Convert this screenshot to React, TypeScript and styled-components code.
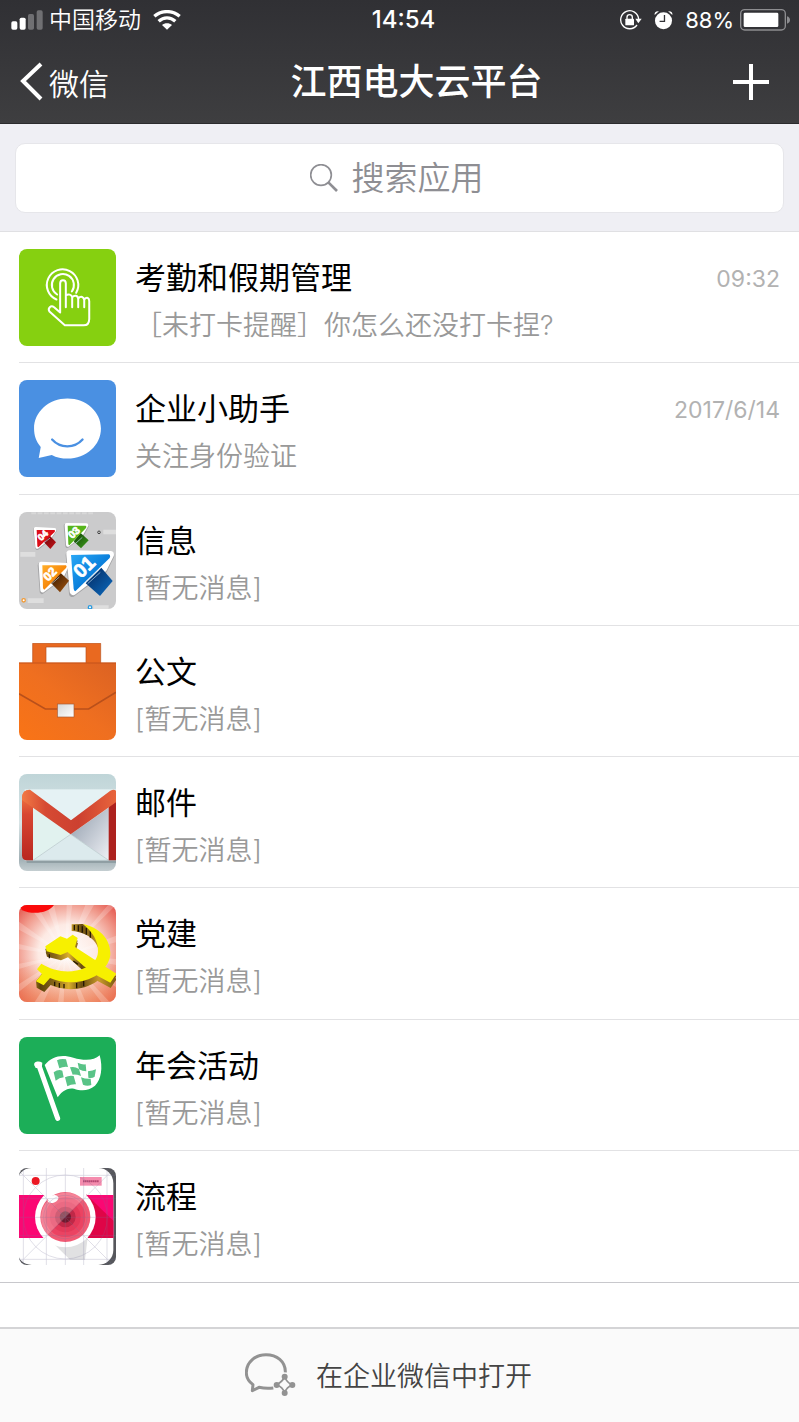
import React from "react";
import styled, { createGlobalStyle } from "styled-components";

const GlobalStyle = createGlobalStyle`
  *, *::before, *::after { box-sizing: border-box; }
  body {
    margin: 0;
    background: #fff;
    color: #000;
    font-family: Inter, "Noto Sans CJK SC", sans-serif;
  }
`;

const Page = styled.div`
  display: flex;
  flex-direction: column;
  min-height: 100vh;
`;

const Header = styled.header`
  color: #fff;
  background: linear-gradient(#303034, #3e3e40);
  border-bottom: 1px solid #2b2b2d;
`;

const StatusBar = styled.div`
  display: grid;
  grid-template-columns: 1fr auto 1fr;
  align-items: center;
  height: 40px;
  padding-left: 8px;
  font-size: 23px;
  font-weight: 350;
  line-height: 40px;
`;

const StatusGroup = styled.div<{ $end?: boolean }>`
  display: flex;
  align-items: center;
  justify-content: ${(p) => (p.$end ? "flex-end" : "flex-start")};
  gap: ${(p) => (p.$end ? "6px" : "12px")};
  padding: ${(p) => (p.$end ? "0 9px 0 0" : "0 0 0 3px")};
`;

const Carrier = styled.span`
  display: flex;
  align-items: center;
  gap: 6px;
`;

const StatusIcons = styled.span`
  display: flex;
  align-items: center;
  gap: 12px;
`;

const Clock = styled.time`
  font-size: 24px;
  font-weight: 500;
`;

const Percent = styled.span`
  font-size: 22px;
  font-weight: 400;
`;

const NavBar = styled.nav`
  display: grid;
  grid-template-columns: 116px 1fr 82px;
  align-items: center;
  height: 83px;
`;

const NavButton = styled.button<{ $end?: boolean }>`
  display: flex;
  align-items: center;
  justify-content: ${(p) => (p.$end ? "flex-end" : "flex-start")};
  gap: 6px;
  height: 100%;
  padding: ${(p) => (p.$end ? "0 30px 0 0" : "0 0 0 20px")};
  border: 0;
  background: none;
  color: inherit;
  font: inherit;
  font-size: 30px;
  font-weight: 350;
  white-space: nowrap;
`;

const NavTitle = styled.h1`
  margin: 0;
  font-size: 36px;
  font-weight: 500;
  line-height: 48px;
  text-align: center;
`;

const SearchArea = styled.div`
  padding: 19px 15px 18px;
  background: #efeff4;
  border-bottom: 1px solid #e0e0e3;
`;

const SearchBox = styled.label`
  display: flex;
  align-items: center;
  justify-content: center;
  gap: 14px;
  height: 70px;
  border: 1px solid #e6e6ea;
  border-radius: 10px;
  background: #fff;
`;

const SearchInput = styled.input`
  width: 138px;
  height: 48px;
  padding: 0;
  border: 0;
  outline: 0;
  background: none;
  color: #333;
  font: inherit;
  font-size: 33px;
  font-weight: 350;
  &::placeholder { color: #8e8e93; opacity: 1; }
`;

const List = styled.ul`
  display: grid;
  grid-auto-rows: 1fr;
  flex: 1;
  margin: 0 0 44px;
  padding: 0;
  list-style: none;
  border-bottom: 1px solid #c8c8cc;
`;

const Item = styled.li`
  padding-left: 19px;
`;

const ItemLink = styled.a<{ $last: boolean }>`
  display: flex;
  gap: 19px;
  height: 100%;
  padding: 17px 19px 12px 0;
  border-bottom: ${(p) => (p.$last ? "0" : "1px solid #e2e2e4")};
  color: inherit;
  text-decoration: none;
`;

const Thumb = styled.svg`
  display: block;
  flex: none;
  width: 97px;
  height: 97px;
  border-radius: 8px;
`;

const ItemText = styled.div`
  flex: 1;
  min-width: 0;
  padding-top: 5px;
`;

const ItemTitle = styled.h2`
  margin: 0;
  font-size: 31px;
  font-weight: 400;
  line-height: 48px;
`;

const ItemNote = styled.p`
  margin: 0;
  color: #999;
  font-size: 27px;
  font-weight: 350;
  line-height: 48px;
`;

const ItemTime = styled.time`
  padding-top: 6px;
  color: #b2b2b2;
  font-size: 23px;
  line-height: 48px;
`;

const Footer = styled.footer`
  border-top: 2px solid #d4d4d6;
  background: #fafafa;
`;

const OpenButton = styled.button`
  display: flex;
  align-items: center;
  justify-content: center;
  gap: 20px;
  width: 100%;
  height: 93px;
  padding: 0 22px 2px 0;
  border: 0;
  background: none;
  color: #444;
  font: inherit;
  font-size: 27px;
  font-weight: 350;
`;

const AttendanceIcon = () => (
  <Thumb viewBox="58 39 290 290" aria-hidden="true">
    <rect x="58" y="39" width="290" height="290" fill="#86d010" />
    <g fill="none" stroke="#fff" strokeWidth="6" strokeLinecap="round" strokeLinejoin="round">
      <path d="M170 190A47 47 0 1 1 229 170" />
      <path d="M172 175A33 33 0 1 1 216 166" />
      <path d="M181 229V142C181 129 198 129 198 142V213M198 178C205 172 216 175 217 184V213M217 184C224 175 234 178 235 188V213M235 187C243 178 252 182 253 192V213M253 190C261 181 268 185 268 195V248Q268 267 251 267H195L149 226C143 216 153 206 163 213L181 229" />
    </g>
  </Thumb>
);

const AssistantIcon = () => (
  <Thumb viewBox="58 433 290 290" aria-hidden="true">
    <rect x="58" y="433" width="290" height="290" fill="#4a90e2" />
    <path
      d="M203 488C259 488 303 528 303 578C303 628 259 668 203 668C186 668 170 665 156 657L117 666L123 633C109 617 103 599 103 578C103 528 147 488 203 488Z"
      fill="#fff"
    />
    <path d="M157 611C181 638 224 638 248 611" fill="none" stroke="#4a90e2" strokeWidth="7" strokeLinecap="round" />
  </Thumb>
);

const InfoIcon = () => (
  <Thumb viewBox="27 36 291 291" aria-hidden="true">
    <defs>
      <linearGradient id="tailRed" x1="0" y1="0" x2="1" y2="1"><stop stopColor="#6a0408" /><stop offset="1" stopColor="#c8141a" /></linearGradient>
      <linearGradient id="tailGreen" x1="0" y1="0" x2="1" y2="1"><stop stopColor="#0e3c06" /><stop offset="1" stopColor="#3fa01a" /></linearGradient>
      <linearGradient id="tailOrange" x1="0" y1="0" x2="1" y2="1"><stop stopColor="#321602" /><stop offset="1" stopColor="#a6560e" /></linearGradient>
      <linearGradient id="tailBlue" x1="0" y1="0" x2="1" y2="1"><stop stopColor="#04265c" /><stop offset="1" stopColor="#0c6cc0" /></linearGradient>
      <linearGradient id="headBlue" x1="0" y1="0" x2="1" y2="1"><stop stopColor="#2aa8f6" /><stop offset=".6" stopColor="#067ad8" /></linearGradient>
      <linearGradient id="headOrange" x1="0" y1="0" x2="1" y2="1"><stop stopColor="#ffae2a" /><stop offset=".6" stopColor="#f68408" /></linearGradient>
    </defs>
    <rect x="27" y="36" width="291" height="291" fill="#cbcbcc" />
    <path d="M64 40H250" stroke="#d8d8d8" strokeWidth="6" strokeDasharray="14 5" />
    <path d="M31 163H76M280 96H318M53 302H101M250 323H296" stroke="#dedede" strokeWidth="14" />
    <circle cx="267" cy="97" r="4" fill="none" stroke="#444" strokeWidth="3" />
    <circle cx="41" cy="301" r="5" fill="#fff" stroke="#f19b38" strokeWidth="4" />
    <circle cx="240" cy="322" r="5" fill="#fff" stroke="#2c9ce0" strokeWidth="4" />
    <g fill="#77777a" stroke="#77777a" strokeLinejoin="round" opacity=".45">
      <path d="M75 89L134 92L120 113L82 144Z" strokeWidth="12" />
      <path d="M167 77L230 79L216 104L172 138Z" strokeWidth="12" />
      <path d="M90 195L170 198L157 230L96 275Z" strokeWidth="14" />
      <path d="M177 166L303 167L282 210L187 281Z" strokeWidth="20" />
    </g>
    <g fill="#fff" stroke="#fff" strokeLinejoin="round">
      <path d="M77 87L133 90L118 112L82 140Z" strokeWidth="12" />
      <path d="M170 75L229 76L214 102L174 134Z" strokeWidth="12" />
      <path d="M93 192L170 196L155 228L98 270Z" strokeWidth="14" />
      <path d="M180 162L301 164L280 206L190 274Z" strokeWidth="22" />
    </g>
    <path d="M118 106L138 127L121 147L102 127Z" fill="url(#tailRed)" />
    <path d="M212 99L236 121L213 145L191 124Z" fill="url(#tailGreen)" />
    <path d="M152 219L177 242L150 277L123 249Z" fill="url(#tailOrange)" />
    <path d="M274 203L308 243L270 288L227 250Z" fill="url(#tailBlue)" />
    <path d="M80 90H133Q137 92 134 96L85 142Q82 141 82 137Z" fill="#dc0e18" />
    <path d="M173 77H227Q231 80 228 84L178 136Q175 135 175 131Z" fill="#57b51c" />
    <path d="M97 196H168Q172 199 168 204L103 269Q100 268 99 264Z" fill="url(#headOrange)" />
    <path d="M183 165L296 163Q303 166 299 174L196 274Q192 273 191 267Z" fill="url(#headBlue)" />
    <g fill="#fff" stroke="#fff" strokeWidth="2" fontFamily="Liberation Sans" fontWeight="700">
      <text x="94" y="124" fontSize="28" transform="rotate(-44 94 124)">04</text>
      <text x="187" y="118" fontSize="32" transform="rotate(-44 187 118)">03</text>
      <text x="114" y="245" fontSize="36" transform="rotate(-44 114 245)">02</text>
      <text x="213" y="237" fontSize="58" transform="rotate(-44 213 237)">01</text>
    </g>
    <path d="M228 245L267 209M233 251L271 217M126 250L148 231M197 130L217 112M100 130L120 114" stroke="#bcd8ea" strokeWidth="3" opacity=".7" />
  </Thumb>
);

const BriefcaseIcon = () => (
  <Thumb viewBox="27 33 291 291" aria-hidden="true">
    <defs>
      <linearGradient id="leather" x1="0" y1="1" x2="1" y2="0"><stop stopColor="#f97416" /><stop offset=".5" stopColor="#ef6f20" /><stop offset="1" stopColor="#db6223" /></linearGradient>
      <linearGradient id="clasp" x1="0" y1="0" x2="1" y2="1"><stop stopColor="#d5d5d5" /><stop offset="1" stopColor="#fff" /></linearGradient>
    </defs>
    <path d="M68 34H272V96H228V45H108V96H68Z" fill="#e96920" stroke="#b9501b" strokeWidth="2" />
    <rect x="27" y="92" width="291" height="232" fill="url(#leather)" />
    <path d="M27 93H318" stroke="#c4531a" strokeWidth="3" />
    <path d="M27 185L106 231H236L318 181" fill="none" stroke="#b9501b" strokeWidth="5" />
    <rect x="142" y="216" width="50" height="39" fill="url(#clasp)" stroke="#a65a33" strokeWidth="2" />
  </Thumb>
);

const MailIcon = () => (
  <Thumb viewBox="27 33 291 291" aria-hidden="true">
    <defs>
      <linearGradient id="mailBack" x1="0" y1="0" x2="0" y2="1"><stop stopColor="#bfd5d8" /><stop offset=".5" stopColor="#d8e4e6" /><stop offset=".88" stopColor="#a2b1b6" /><stop offset="1" stopColor="#c4ced1" /></linearGradient>
      <linearGradient id="mailRed" x1="0" y1="0" x2="0" y2="1"><stop stopColor="#f78448" /><stop offset=".35" stopColor="#d84632" /><stop offset="1" stopColor="#b9261f" /></linearGradient>
      <linearGradient id="mailShade" x1="0" y1="0" x2="1" y2="1"><stop stopColor="#8f9baa" /><stop offset="1" stopColor="#eef0f5" /></linearGradient>
      <linearGradient id="mailStroke" x1="36" y1="0" x2="318" y2="0" gradientUnits="userSpaceOnUse"><stop stopColor="#f27a45" /><stop offset=".25" stopColor="#d64a33" /><stop offset=".6" stopColor="#cc4030" /><stop offset="1" stopColor="#e8643c" /></linearGradient>
    </defs>
    <rect x="27" y="33" width="291" height="291" fill="url(#mailBack)" />
    <path d="M50 290H318V300H50Z" fill="#7f8e93" opacity=".6" />
    <rect x="44" y="79" width="274" height="213" fill="#e5f2f4" />
    <path d="M69 134L182 214L69 292Z" fill="#e1f2ef" />
    <path d="M182 214L296 134V292Z" fill="url(#mailShade)" />
    <path d="M69 292L182 214L296 292Z" fill="#dceaed" stroke="#b8c6c9" strokeWidth="2" />
    <path d="M36 102Q38 80 58 80L69 130V292H48Q36 290 36 277Z" fill="url(#mailRed)" />
    <path d="M296 126L318 100V292H296Z" fill="#ad211e" />
    <path d="M36 106Q36 81 60 80L183 172L301 83Q312 78 318 83V118L182 214L69 134L36 111Z" fill="url(#mailStroke)" />
  </Thumb>
);

const HAMMER =
  "M106 154L151 124L171 131L188 119L203 129L195 156L319 236L301 263L262 242L222 214L173 171L152 180L110 169Z";
const SICKLE =
  "M219 87C268 97 301 132 301 174C301 192 294 206 283 219L264 238C222 268 162 268 120 249L101 271L78 259L96 237L81 223L94 206C136 231 183 237 226 218C250 206 263 192 264 170C266 139 247 110 219 87Z";

const PartyIcon = () => (
  <Thumb viewBox="27 30 291 291" aria-hidden="true">
    <defs>
      <radialGradient id="partyGlow" cx=".5" cy=".5" r=".75"><stop stopColor="#fff" /><stop offset=".4" stopColor="#fdeae4" /><stop offset=".7" stopColor="#f0988a" /><stop offset="1" stopColor="#e03c36" /></radialGradient>
      <linearGradient id="partyFade" x1="0" y1="0" x2="0" y2="1"><stop offset=".55" stopColor="#f08a50" stopOpacity="0" /><stop offset="1" stopColor="#f08a50" stopOpacity=".5" /></linearGradient>
      <linearGradient id="partyEdge" x1="60" y1="0" x2="318" y2="0" gradientUnits="userSpaceOnUse"><stop stopColor="#c99a22" /><stop offset=".12" stopColor="#5d420c" /><stop offset=".3" stopColor="#8b6a18" /><stop offset=".45" stopColor="#dcb02c" /><stop offset=".6" stopColor="#6a4c10" /><stop offset=".8" stopColor="#c89a28" /><stop offset="1" stopColor="#7b5a14" /></linearGradient>
    </defs>
    <rect x="27" y="30" width="291" height="291" fill="url(#partyGlow)" />
    <rect x="27" y="30" width="291" height="291" fill="url(#partyFade)" />
    <path
      d="M166 180L27 80V104ZM166 180L27 147V163ZM166 180L27 206V222ZM166 180L27 267V290ZM166 180L74 321H101ZM166 180L144 321H161ZM166 180L208 321H227ZM166 180L274 321H299ZM166 180L318 258V276ZM166 180L318 192V210ZM166 180L318 122V142ZM166 180L294 30H318ZM166 180L226 30H252ZM166 180L170 30H187ZM166 180L109 30H132ZM166 180L55 30H80Z"
      fill="#fff" opacity=".22"
    />
    <path d="M30 30H132C116 54 69 61 35 45Z" fill="#fa0a0a" />
    <g fill="url(#partyEdge)">
      <path d={HAMMER} transform="translate(1 16)" />
      <path d={HAMMER} transform="translate(0 8)" />
      <path d="M96 237L78 259L80 278L103 291L122 270C163 289 222 287 262 258L264 236L120 245Z" />
      <path d="M185 88L219 87L260 118L268 176C266 145 240 112 185 108Z" />
    </g>
    <path d="M193 90V106M205 91V109M217 94V113M229 99V119M241 108V128M134 260V273M148 264V278M162 267V280M200 264V280M221 258V274M118 178V190M190 198L204 208" stroke="#241704" strokeWidth="4" />
    <path d={SICKLE} fill="#f7f000" />
    <path d={HAMMER} fill="#f7f000" />
  </Thumb>
);

const FlagIcon = () => (
  <Thumb viewBox="27 36 291 291" aria-hidden="true">
    <rect x="27" y="36" width="291" height="291" fill="#1cae58" />
    <path d="M87 122L143 280" stroke="#fff" strokeWidth="15" strokeLinecap="round" />
    <path d="M73 121C69 110 86 106 97 113L95 130L77 129Z" fill="#fff" />
    <path
      d="M104 120C126 94 154 87 190 98C223 108 252 107 269 91C279 128 274 164 255 182C235 199 212 198 192 191C169 187 154 202 143 217Z"
      fill="#fff"
    />
    <g fill="#59c387">
      <path d="M141 106Q153 100 168 103L174 126Q160 124 148 130Z" />
      <path d="M203 113Q217 120 227 118L229 139Q217 139 207 133Z" />
      <path d="M131 142Q145 132 157 137L161 157Q148 158 137 167Z" />
      <path d="M180 127Q194 123 207 132L213 153Q199 148 188 149Z" />
      <path d="M234 139Q248 137 258 133L254 155Q246 161 235 158Z" />
      <path d="M165 157Q177 150 191 153L198 178Q184 177 172 184Z" />
      <path d="M213 157Q229 163 242 161L244 180Q231 185 219 179Z" />
    </g>
  </Thumb>
);

const CameraIcon = () => (
  <Thumb viewBox="27 33 291 291" aria-hidden="true">
    <rect x="27" y="33" width="291" height="291" fill="#57585c" />
    <rect x="20" y="33" width="290" height="291" rx="45" fill="#fff" />
    <path d="M20 114H310V243H20Z" fill="#fb0874" />
    <path d="M228 112L310 191V243H222Z" fill="#df0648" />
    <path d="M110 239L180 308H225L235 225Z" fill="#e1e1e2" />
    <circle cx="166" cy="180" r="91" fill="#fff" />
    <circle cx="166" cy="180" r="75" fill="#f25a74" />
    <circle cx="166" cy="180" r="60" fill="#ec4463" />
    <circle cx="166" cy="180" r="46" fill="#e43a5a" />
    <circle cx="166" cy="180" r="31" fill="#c02848" />
    <circle cx="166" cy="180" r="17" fill="#701a2e" />
    <path d="M113 233A75 75 0 0 1 219 127Z" fill="#fff" opacity=".25" />
    <ellipse cx="129" cy="126" rx="17" ry="11" fill="#fff" transform="rotate(-20 129 126)" />
    <circle cx="77" cy="72" r="12" fill="#ec1824" />
    <rect x="210" y="60" width="65" height="26" fill="#f58cae" />
    <path d="M219 73H267" stroke="#b64772" strokeWidth="6" strokeDasharray="5 1" />
    <g fill="none" stroke="#777399" strokeWidth="2" opacity=".35">
      <path d="M40 33V324M109 33V324M166 33V324M221 33V324M291 33V324M27 55H318M27 125H318M27 181H318M27 236H318M27 307H318M27 42L309 324M27 320L309 38" />
      <circle cx="166" cy="180" r="126" />
      <circle cx="166" cy="180" r="65" />
    </g>
  </Thumb>
);

const SignalIcon = () => (
  <svg width="32" height="20" viewBox="33 28 96 60" fill="#fff" aria-hidden="true">
    <rect x="34" y="62" width="18" height="25" rx="5" />
    <rect x="59" y="51" width="18" height="36" rx="5" />
    <rect x="84" y="40" width="18" height="47" rx="5" opacity=".3" />
    <rect x="110" y="29" width="18" height="58" rx="5" opacity=".3" />
  </svg>
);

const WifiIcon = () => (
  <svg width="28" height="20" viewBox="463 28 84 60" aria-hidden="true">
    <g fill="none" stroke="#fff" strokeWidth="10">
      <path d="M467 47C489 28 521 28 543 47" />
      <path d="M480 62C495 48 515 48 530 62" />
    </g>
    <path d="M505 87L490 73C498 66 512 66 520 73Z" fill="#fff" />
  </svg>
);

const RotationLockIcon = () => (
  <svg width="23" height="20" viewBox="662 28 69 60" aria-hidden="true">
    <path d="M716 73A27 27 0 1 1 721 55" fill="none" stroke="#fff" strokeWidth="4" />
    <path d="M711 54H730L720 68Z" fill="#fff" />
    <rect x="681" y="54" width="26" height="20" rx="2" fill="#fff" />
    <path d="M686 55V50A8 8 0 0 1 702 50V55" fill="none" stroke="#fff" strokeWidth="4" />
  </svg>
);

const AlarmIcon = () => (
  <svg width="19" height="20" viewBox="767 28 58 60" aria-hidden="true">
    <circle cx="796" cy="60" r="26" fill="#fff" />
    <path d="M769 43Q767 30 782 31ZM823 43Q825 30 810 31Z" fill="#fff" />
    <path d="M799 43V62H784" fill="none" stroke="#323236" strokeWidth="4" />
  </svg>
);

const BatteryIcon = () => (
  <svg width="50" height="22" viewBox="1020 25 150 66" aria-hidden="true">
    <rect x="1022" y="27" width="134" height="61" rx="12" fill="none" stroke="#8d8d90" strokeWidth="4" />
    <rect x="1031" y="36" width="104" height="43" rx="4" fill="#fff" />
    <path d="M1161 47Q1170 50 1170 58Q1170 66 1161 69Z" fill="#8d8d90" />
  </svg>
);

const BackIcon = () => (
  <svg width="23" height="39" viewBox="0 0 23 39" fill="none" stroke="#fff" strokeWidth="4" aria-hidden="true">
    <path d="M21 2L3 19L21 37" />
  </svg>
);

const PlusIcon = () => (
  <svg width="36" height="36" viewBox="0 0 36 36" stroke="#fff" strokeWidth="4" aria-hidden="true">
    <path d="M18 0V36M0 18H36" />
  </svg>
);

const SearchIcon = () => (
  <svg width="28" height="28" viewBox="930 489 84 84" fill="none" stroke="#8e8e93" aria-hidden="true">
    <circle cx="963" cy="522" r="31" strokeWidth="5" />
    <path d="M985 544L1011 570" strokeWidth="8" />
  </svg>
);

const WorkChatIcon = () => (
  <svg width="51" height="44" viewBox="75 98 153 132" fill="none" stroke="#929292" aria-hidden="true">
    <path d="M196 156C197 123 170 103 138 103C105 103 79 126 79 157C79 174 87 184 99 193L97 211L117 201C130 204 145 205 160 203" strokeWidth="9" strokeLinejoin="round" />
    <path d="M194 169Q188 184 170 193Q188 200 194 217Q200 200 217 194Q200 186 194 169Z" strokeWidth="5" />
    <g fill="#929292" stroke="none">
      <circle cx="194" cy="169" r="9" />
      <circle cx="170" cy="194" r="9" />
      <circle cx="217" cy="194" r="9" />
      <circle cx="194" cy="218" r="9" />
    </g>
  </svg>
);

interface AppEntry {
  title: string;
  note: string;
  time?: string;
  Icon: React.ComponentType;
}

const EMPTY = "[暂无消息]";

const entries: AppEntry[] = [
  { title: "考勤和假期管理", note: "［未打卡提醒］你怎么还没打卡捏?", time: "09:32", Icon: AttendanceIcon },
  { title: "企业小助手", note: "关注身份验证", time: "2017/6/14", Icon: AssistantIcon },
  { title: "信息", note: EMPTY, Icon: InfoIcon },
  { title: "公文", note: EMPTY, Icon: BriefcaseIcon },
  { title: "邮件", note: EMPTY, Icon: MailIcon },
  { title: "党建", note: EMPTY, Icon: PartyIcon },
  { title: "年会活动", note: EMPTY, Icon: FlagIcon },
  { title: "流程", note: EMPTY, Icon: CameraIcon },
];

export default function App() {
  return (
    <Page lang="zh-CN">
      <GlobalStyle />
      <Header>
        <StatusBar>
          <StatusGroup>
            <Carrier><SignalIcon />中国移动</Carrier>
            <WifiIcon />
          </StatusGroup>
          <Clock>14:54</Clock>
          <StatusGroup $end>
            <StatusIcons>
              <RotationLockIcon />
              <AlarmIcon />
              <Percent>88%</Percent>
            </StatusIcons>
            <BatteryIcon />
          </StatusGroup>
        </StatusBar>
        <NavBar>
          <NavButton type="button"><BackIcon />微信</NavButton>
          <NavTitle>江西电大云平台</NavTitle>
          <NavButton type="button" $end aria-label="添加"><PlusIcon /></NavButton>
        </NavBar>
      </Header>
      <SearchArea>
        <SearchBox>
          <SearchIcon />
          <SearchInput type="text" placeholder="搜索应用" aria-label="搜索应用" />
        </SearchBox>
      </SearchArea>
      <List>
        {entries.map(({ title, note, time, Icon }, i) => (
          <Item key={title}>
            <ItemLink href="#" $last={i === entries.length - 1}>
              <Icon />
              <ItemText>
                <ItemTitle>{title}</ItemTitle>
                <ItemNote>{note}</ItemNote>
              </ItemText>
              {time && <ItemTime>{time}</ItemTime>}
            </ItemLink>
          </Item>
        ))}
      </List>
      <Footer>
        <OpenButton type="button"><WorkChatIcon />在企业微信中打开</OpenButton>
      </Footer>
    </Page>
  );
}
